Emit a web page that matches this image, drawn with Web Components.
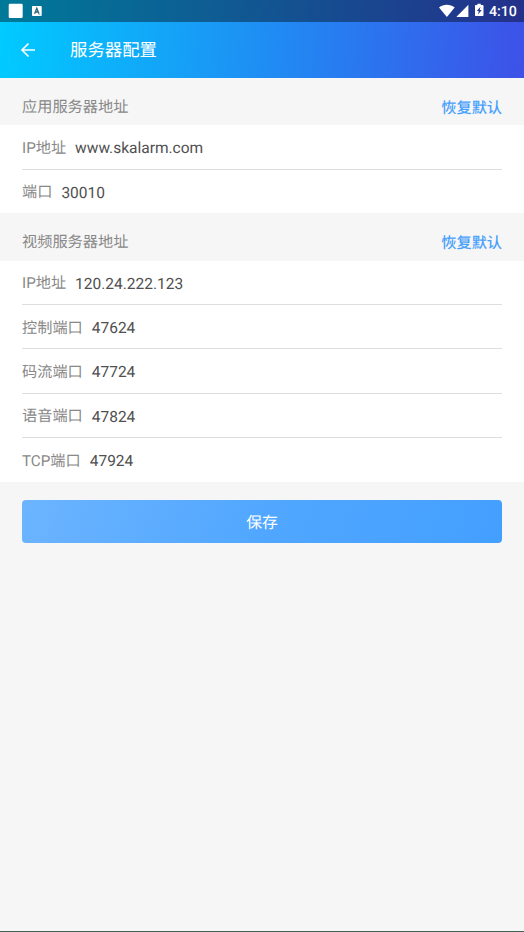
<!DOCTYPE html>
<html lang="zh-CN">
<head>
<meta charset="utf-8">
<title>服务器配置</title>
<style>
html,body{margin:0;height:100%}
body{font-family:Roboto,"Noto Sans CJK SC",sans-serif;background:#f6f6f6;overflow:hidden;text-rendering:geometricPrecision}
</style>
</head>
<body>
<settings-page></settings-page>
<script>
const define = (name, html, setup) => customElements.define(name, class extends HTMLElement {
  connectedCallback() {
    if (this.shadowRoot) return;
    const t = document.createElement('template');
    t.innerHTML = html;
    this.attachShadow({mode: 'open'}).append(t.content.cloneNode(true));
    if (setup) setup(this, this.shadowRoot);
  }
});

define('status-bar', `
<style>
:host{display:flex;justify-content:space-between;height:22px;background:rgba(0,0,0,.4);color:#fff}
svg{display:block}
.r{display:flex}
span{font-size:14.2px;font-weight:500;line-height:24px;width:35px;white-space:nowrap}
</style>
<svg width="60" height="22"><rect x="8.7" y="3.8" width="14" height="14.2" rx="1.2" fill="#fff"/>
<rect x="32" y="6" width="9.7" height="10" rx=".8" fill="#fff"/><path d="M34.6 13.8 36.8 8.2 39 13.8M35.5 12h2.6" fill="none" stroke="#28677e" stroke-width="1.3"/><path d="M38.5 14.6h2" stroke="#8ab0be" stroke-width=".8"/></svg>
<div class="r"><svg width="50" height="22" viewBox="439 0 50 22" fill="#fff">
<path d="M439 7.6C443.4 3.9 450.2 3.9 454.7 7.6L446.9 17Z"/>
<path d="M468.4 4.8V17H456.3Z"/>
<path fill-rule="evenodd" d="M477.4 5V3.8h3.400V5h2a.7.7 0 0 1 .7.7v9.600a.7.7 0 0 1-.7.7h-7.100a.7.7 0 0 1-.7-.7V5.700a.7.7 0 0 1 .7-.7ZM480.500 6.700 476.800 11.100h2l-.8 3.500 3.800-4.700h-2.100Z"/>
</svg><span>4:10</span></div>`);

define('app-bar', `
<style>
:host{display:flex;align-items:center;height:56px;color:#fff}
svg{display:block;margin-left:19px;width:18px;height:18px}
h1{margin:2px 0 0 33px;font-size:17.4px;font-weight:400;line-height:26px}
</style>
<svg viewBox="0 0 18 18" fill="none" stroke="#fff" stroke-width="1.7"><path d="M16 9H3.200M9.500 2.500 3 9l6.500 6.500"/></svg>
<h1><slot></slot></h1>`);

define('section-head', `
<style>
:host{display:flex;justify-content:space-between;box-sizing:border-box;height:47.300px;padding:18px 22px 0;font-size:15.200px;line-height:22px;color:#888}
button{all:unset;color:#46a0fc;font-weight:500;padding-top:.7px;height:22px}
</style>
<slot></slot><button>恢复默认</button>`);

define('config-list', `
<style>:host{display:block;background:#fff;padding:0 22px}</style><slot></slot>`);

define('config-row', `
<style>
:host{display:flex;box-sizing:border-box;height:44.400px;padding-top:11.600px;border-bottom:1px solid #dedede;font-size:15.200px;line-height:22px;color:#888}
:host(:last-child){height:43.700px;border-bottom:0}
.v{font-size:15.500px;color:#505050;margin-left:9px;padding-top:.4px}
</style>
<span class="l"></span><span class="v"><slot></slot></span>`,
(el, root) => root.querySelector('.l').textContent = el.getAttribute('label'));

define('save-button', `
<style>
:host{display:block;margin:17.700px 22px 0}
button{all:unset;display:block;box-sizing:border-box;width:100%;height:43.500px;border-radius:4px;text-align:center;font-size:15.800px;line-height:46px;color:#fff;background:linear-gradient(110deg,#6cb4ff,#51a7ff 50%,#439fff)}
</style>
<button><slot></slot></button>`);

define('settings-page', `
<style>
:host{display:flex;flex-direction:column;box-sizing:border-box;height:100vh;background:#f6f6f6;border-bottom:1px solid #3d6359}
header{background:linear-gradient(94deg,#00cbff,#3d51e8)}
</style>
<header><status-bar></status-bar><app-bar>服务器配置</app-bar></header>
<section-head>应用服务器地址</section-head>
<config-list>
<config-row label="IP地址">www.skalarm.com</config-row>
<config-row label="端口">30010</config-row>
</config-list>
<section-head>视频服务器地址</section-head>
<config-list>
<config-row label="IP地址">120.24.222.123</config-row>
<config-row label="控制端口">47624</config-row>
<config-row label="码流端口">47724</config-row>
<config-row label="语音端口">47824</config-row>
<config-row label="TCP端口">47924</config-row>
</config-list>
<save-button>保存</save-button>`);
</script>
</body>
</html>
